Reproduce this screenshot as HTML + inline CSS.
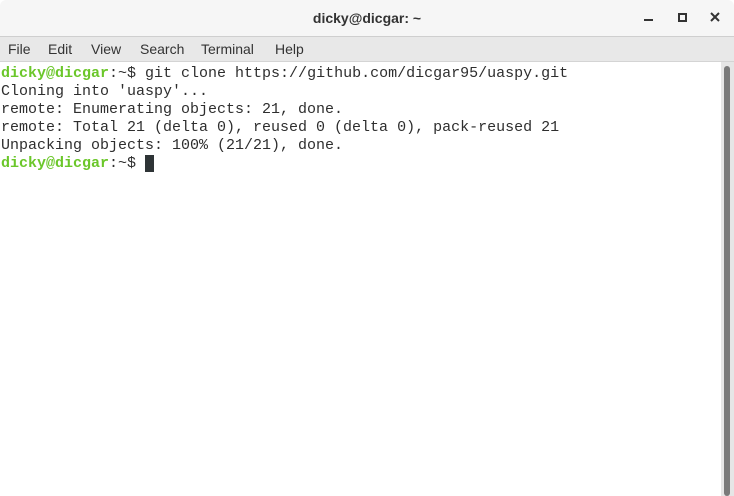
<!DOCTYPE html>
<html><head><style>
body{margin:0;width:734px;height:496px;overflow:hidden;background:#fff;font-family:"Liberation Sans",sans-serif;position:relative}
#title{position:absolute;left:0;top:0;width:734px;height:36px;background:#f6f6f6;border-bottom:1px solid #cfcfcf;border-radius:6px 6px 0 0}
#title .t{position:absolute;left:0;right:0;top:10px;text-align:center;font-size:14px;font-weight:bold;color:#333}
#menu{position:absolute;left:0;top:37px;width:734px;height:24px;background:#e8e8e8;border-bottom:1px solid #d4d4d4;font-size:14px;color:#333}
#menu span{position:absolute;top:4px}
#term{position:absolute;left:1px;top:65px;font-family:"Liberation Mono",monospace;font-size:15px;line-height:18px;color:#2e2e2e;white-space:pre}
.g{color:#6bc72a;font-weight:bold}
#sb{position:absolute;left:721px;top:62px;width:13px;height:434px;background:#e6e6e6}
#th{position:absolute;left:724px;top:66px;width:6px;height:430px;background:#7a7a7a;border-radius:3px}
</style></head><body>
<div id="title"><div class="t">dicky@dicgar: ~</div>
<div style="position:absolute;left:644px;top:19px;width:9px;height:2px;background:#333"></div>
<div style="position:absolute;left:678px;top:13px;width:5px;height:5px;border:2px solid #333"></div>
<svg style="position:absolute;left:710px;top:12px" width="10" height="10"><path d="M1 1L9 9M9 1L1 9" stroke="#333" stroke-width="2"/></svg>
</div>
<div id="menu"><span style="left:8px">File</span><span style="left:48px">Edit</span><span style="left:91px">View</span><span style="left:140px">Search</span><span style="left:201px">Terminal</span><span style="left:275px">Help</span></div>
<div id="term"><span class="g">dicky@dicgar</span>:~$ git clone https://github.com/dicgar95/uaspy.git
Cloning into 'uaspy'...
remote: Enumerating objects: 21, done.
remote: Total 21 (delta 0), reused 0 (delta 0), pack-reused 21
Unpacking objects: 100% (21/21), done.
<span class="g">dicky@dicgar</span>:~$ <span style="background:#2e3436"> </span></div>
<div id="sb"></div><div id="th"></div>
</body></html>
